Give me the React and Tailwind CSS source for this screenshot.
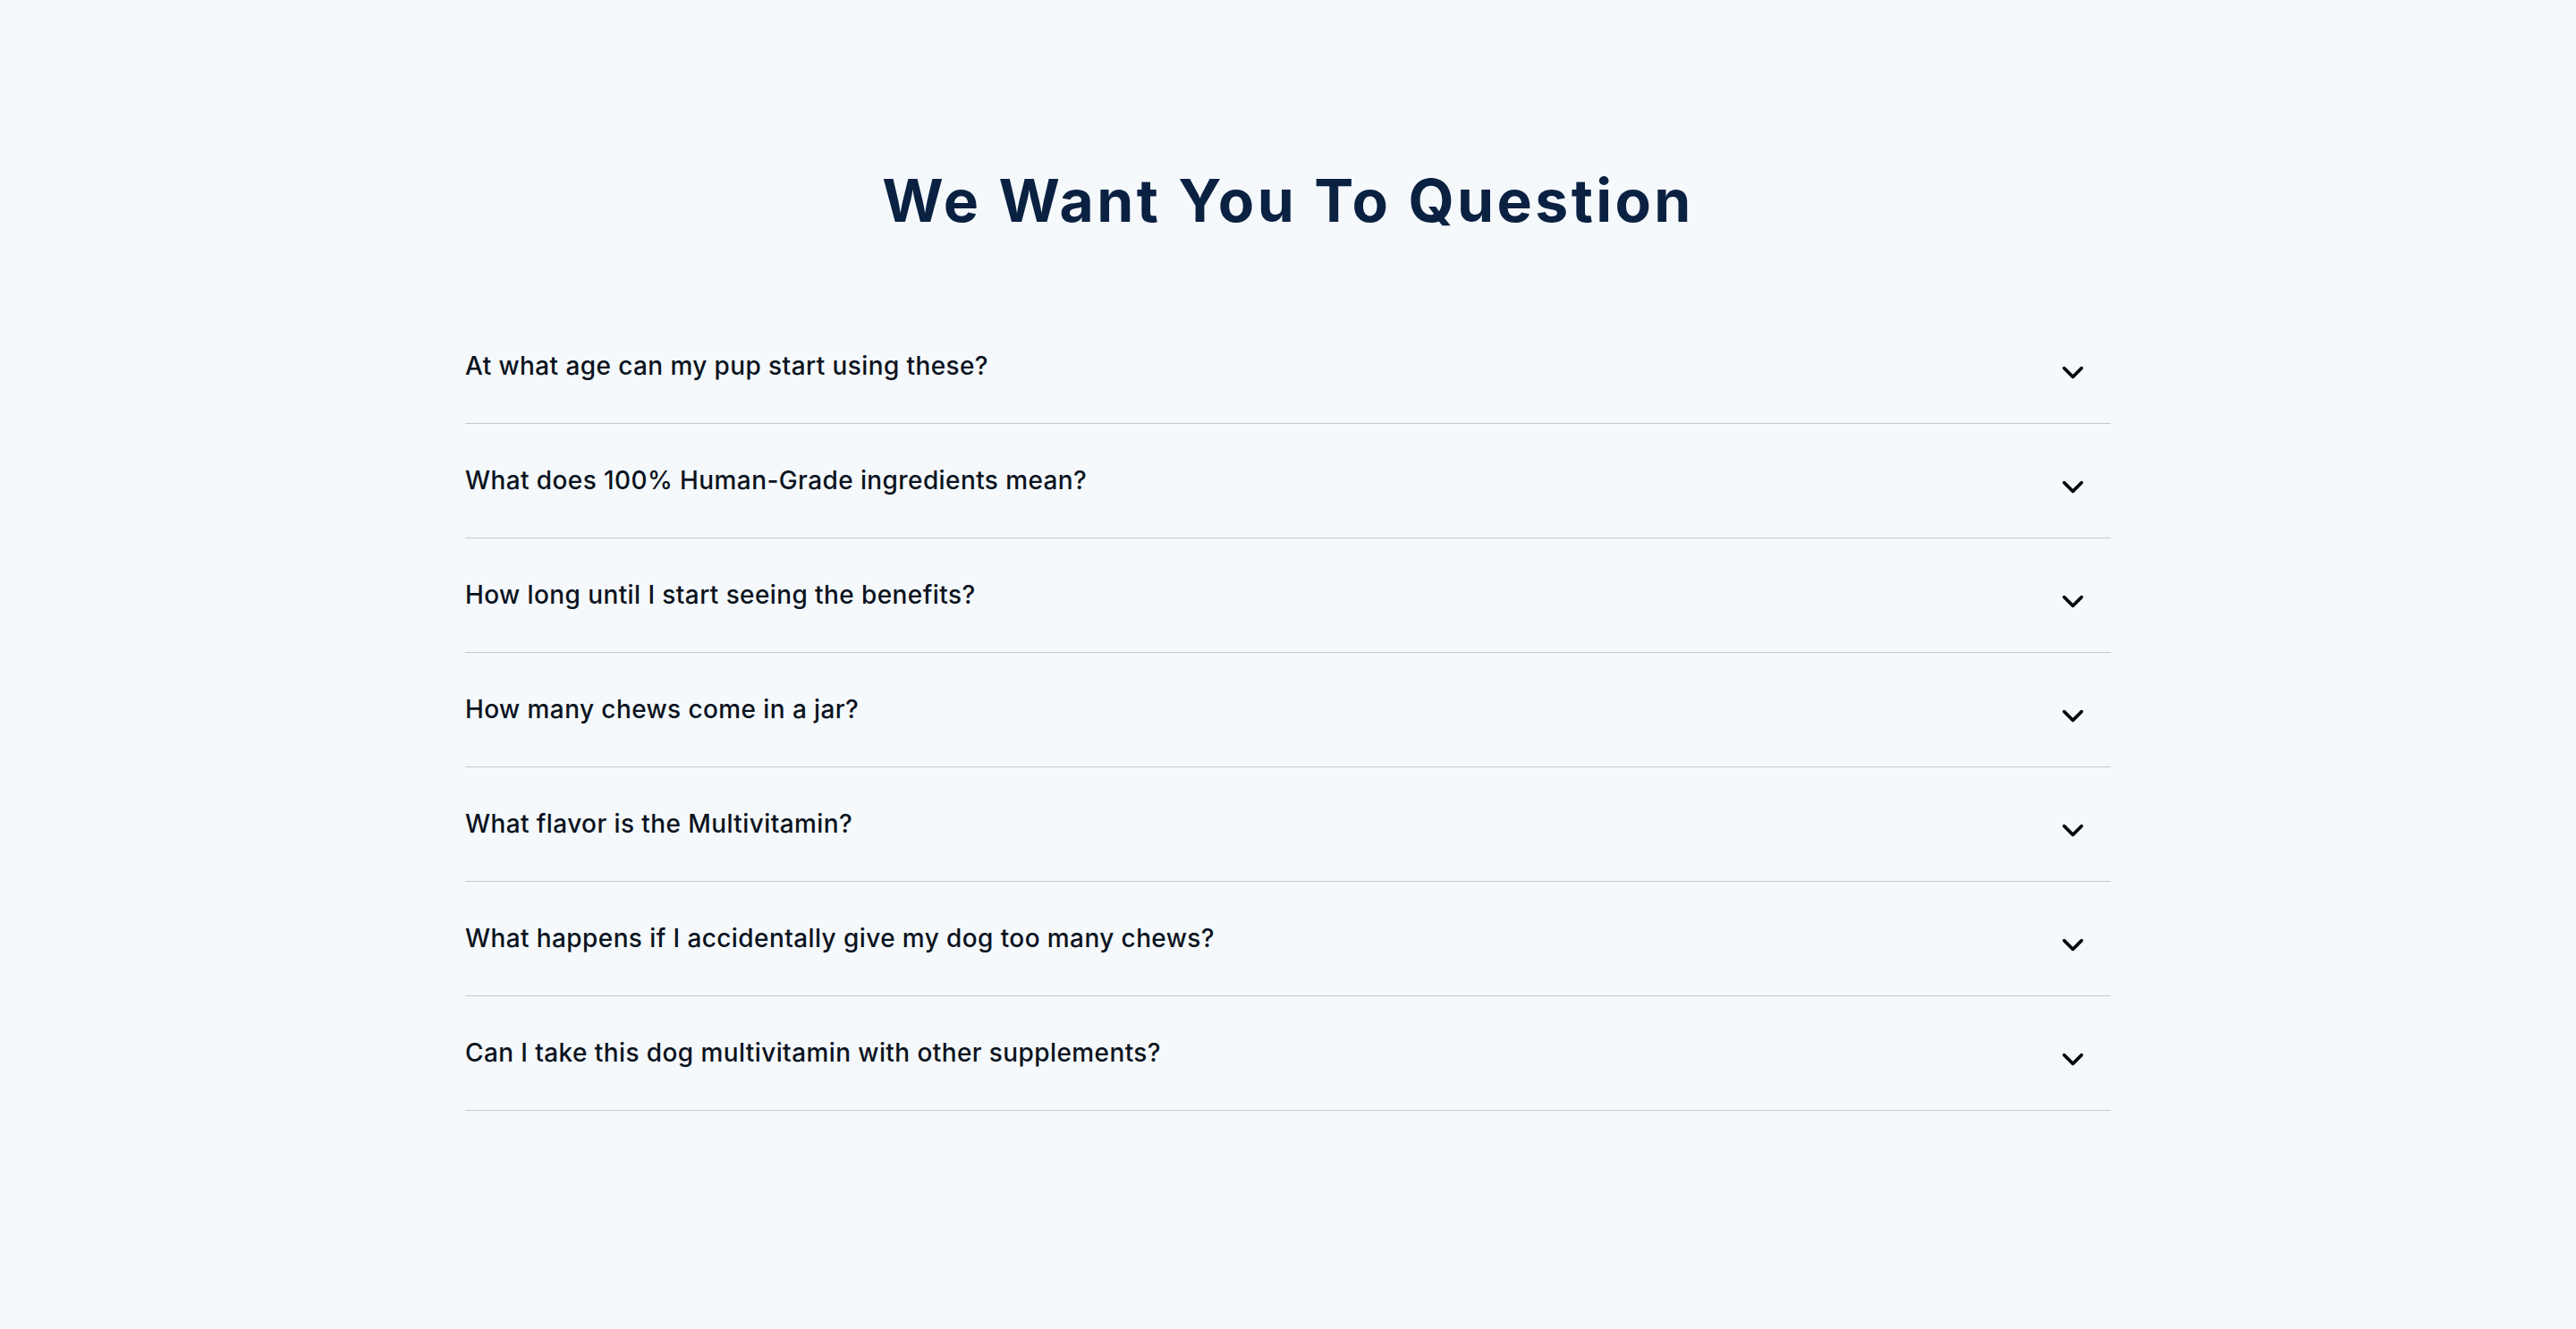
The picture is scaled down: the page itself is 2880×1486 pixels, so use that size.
import { ChevronDown } from "lucide-react";

const questions = [
  "At what age can my pup start using these?",
  "What does 100% Human-Grade ingredients mean?",
  "How long until I start seeing the benefits?",
  "How many chews come in a jar?",
  "What flavor is the Multivitamin?",
  "What happens if I accidentally give my dog too many chews?",
  "Can I take this dog multivitamin with other supplements?",
];

function FaqRow({ question }) {
  return (
    <button
      type="button"
      className="flex w-full items-center justify-between border-b border-[#c4cad0] py-[44px] text-left"
    >
      <span className="text-[28px] font-[450] leading-[39px] tracking-[0.4px] text-[#0b1320] [font-family:Inter,'Liberation_Sans',sans-serif]">
        {question}
      </span>
      <ChevronDown
        className="mr-[23px] h-[39px] w-[39px] translate-y-[7px] text-[#05080d]"
        strokeWidth={2.2}
      />
    </button>
  );
}

export default function App() {
  return (
    <div className="min-h-[1486px] w-full bg-[#f5f9fc] pt-[191px]">
      <h2 className="text-center text-[66px] font-bold leading-none tracking-[3.4px] text-[#0a2142] [font-family:Inter,'Liberation_Sans',sans-serif]">
        We Want You To Question
      </h2>
      <div className="mx-auto mt-[89px] w-[1840px]">
        {questions.map((q) => (
          <FaqRow key={q} question={q} />
        ))}
      </div>
    </div>
  );
}
